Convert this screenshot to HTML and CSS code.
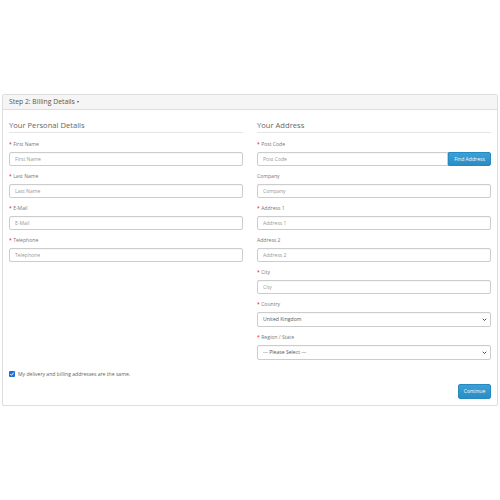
FILE: index.html
```html
<!DOCTYPE html>
<html lang="en">
<head>
<meta charset="utf-8">
<title>Checkout</title>
<link rel="stylesheet" href="styles.css">
</head>
<body>
<div class="page">
  <div class="panel">
    <div class="panel-heading">Step 2: Billing Details <span class="caret"></span></div>
    <div class="panel-body">
      <div class="cols">
        <div class="col">
          <div class="legend">Your Personal Details</div>
          <div class="field"><label class="req">First Name</label><div class="input">First Name</div></div>
          <div class="field"><label class="req">Last Name</label><div class="input">Last Name</div></div>
          <div class="field"><label class="req">E-Mail</label><div class="input">E-Mail</div></div>
          <div class="field"><label class="req">Telephone</label><div class="input">Telephone</div></div>
        </div>
        <div class="col">
          <div class="legend">Your Address</div>
          <div class="field"><label class="req">Post Code</label>
            <div class="group"><div class="input grow">Post Code</div><div class="btn btn-addon">Find Address</div></div>
          </div>
          <div class="field"><label>Company</label><div class="input">Company</div></div>
          <div class="field"><label class="req">Address 1</label><div class="input">Address 1</div></div>
          <div class="field"><label>Address 2</label><div class="input">Address 2</div></div>
          <div class="field"><label class="req">City</label><div class="input">City</div></div>
          <div class="field"><label class="req">Country</label>
            <div class="select">United Kingdom<svg class="chev" viewBox="0 0 10 10" width="5" height="5"><path d="M1.5 3.5 L5 7 L8.5 3.5" fill="none" stroke="#333" stroke-width="1.8"/></svg></div>
          </div>
          <div class="field"><label class="req">Region / State</label>
            <div class="select">--- Please Select ---<svg class="chev" viewBox="0 0 10 10" width="5" height="5"><path d="M1.5 3.5 L5 7 L8.5 3.5" fill="none" stroke="#333" stroke-width="1.8"/></svg></div>
          </div>
        </div>
      </div>
      <div class="check-row">
        <span class="checkbox"><svg viewBox="0 0 10 10" width="6" height="6"><path d="M2.2 5.2 L4.2 7.2 L7.8 2.8" fill="none" stroke="#fff" stroke-width="1.6"/></svg></span>
        <span>My delivery and billing addresses are the same.</span>
      </div>
      <div class="actions"><div class="btn btn-continue">Continue</div></div>
    </div>
  </div>
</div>
</body>
</html>
```

FILE: styles.css
```css
* { box-sizing: border-box; }
html, body { margin: 0; padding: 0; background: #fff; }
body {
  font-family: "Open Sans", "Liberation Sans", sans-serif;
  font-size: 5.1px;
  color: #666;
}
.page { padding: 94px 2px 0 2px; }
.panel {
  border: 1px solid #ddd;
  border-radius: 2px;
  background: #fff;
  box-shadow: 0 0.5px 1px rgba(0,0,0,0.05);
}
.panel-heading {
  height: 15px;
  line-height: 14px;
  padding: 0 6px;
  background: #f5f5f5;
  border-bottom: 1px solid #ddd;
  font-size: 6.8px;
  color: #555;
}
.caret {
  display: inline-block;
  width: 0; height: 0;
  border-left: 1.7px solid transparent;
  border-right: 1.7px solid transparent;
  border-top: 2px solid #555;
  vertical-align: 0.8px;
}
.panel-body { padding: 6px 6px 6px 6px; }
.cols { display: grid; grid-template-columns: 234px 234px; column-gap: 14px; }
.legend {
  font-size: 7.6px;
  font-weight: 400;
  color: #666;
  line-height: 11px;
  padding-top: 4px;
  padding-bottom: 1px;
  border-bottom: 1px solid #e5e5e5;
  margin-bottom: 8px;
}
.field { margin-bottom: 7px; }
.field label {
  display: block;
  line-height: 7px;
  height: 7px;
  margin-bottom: 4px;
  color: #777;
}
.field label.req::before { content: "* "; color: #f00; }
.input, .select {
  height: 14px;
  line-height: 12px;
  border: 1px solid #ccc;
  border-radius: 2px;
  padding: 0 5px;
  color: #999;
  background: #fff;
  box-shadow: inset 0 0.5px 0.5px rgba(0,0,0,0.06);
}
.select {
  position: relative;
  height: 15px;
  line-height: 13px;
  color: #555;
}
.chev { position: absolute; right: 3px; top: 4px; }
.group { display: flex; }
.group .grow { flex: 1; border-top-right-radius: 0; border-bottom-right-radius: 0; }
.btn {
  color: #fff;
  background: linear-gradient(#3aa2d8, #2a8cc4);
  border: 1px solid #2888c0;
  border-radius: 2px;
  text-align: center;
  text-shadow: 0 -0.5px 0 rgba(0,0,0,0.15);
}
.btn-addon {
  width: 43px;
  height: 14px;
  line-height: 12px;
  border-top-left-radius: 0;
  border-bottom-left-radius: 0;
}
.check-row {
  display: flex;
  align-items: center;
  gap: 3px;
  height: 8px;
  line-height: 8px;
  margin-top: 3px;
  color: #666;
}
.checkbox {
  display: inline-flex;
  align-items: center;
  justify-content: center;
  width: 6px; height: 6px;
  background: #1a6fe0;
  border-radius: 1px;
}
.actions { display: flex; justify-content: flex-end; margin-top: 6px; }
.btn-continue {
  width: 33px;
  height: 15px;
  line-height: 13px;
}
```
